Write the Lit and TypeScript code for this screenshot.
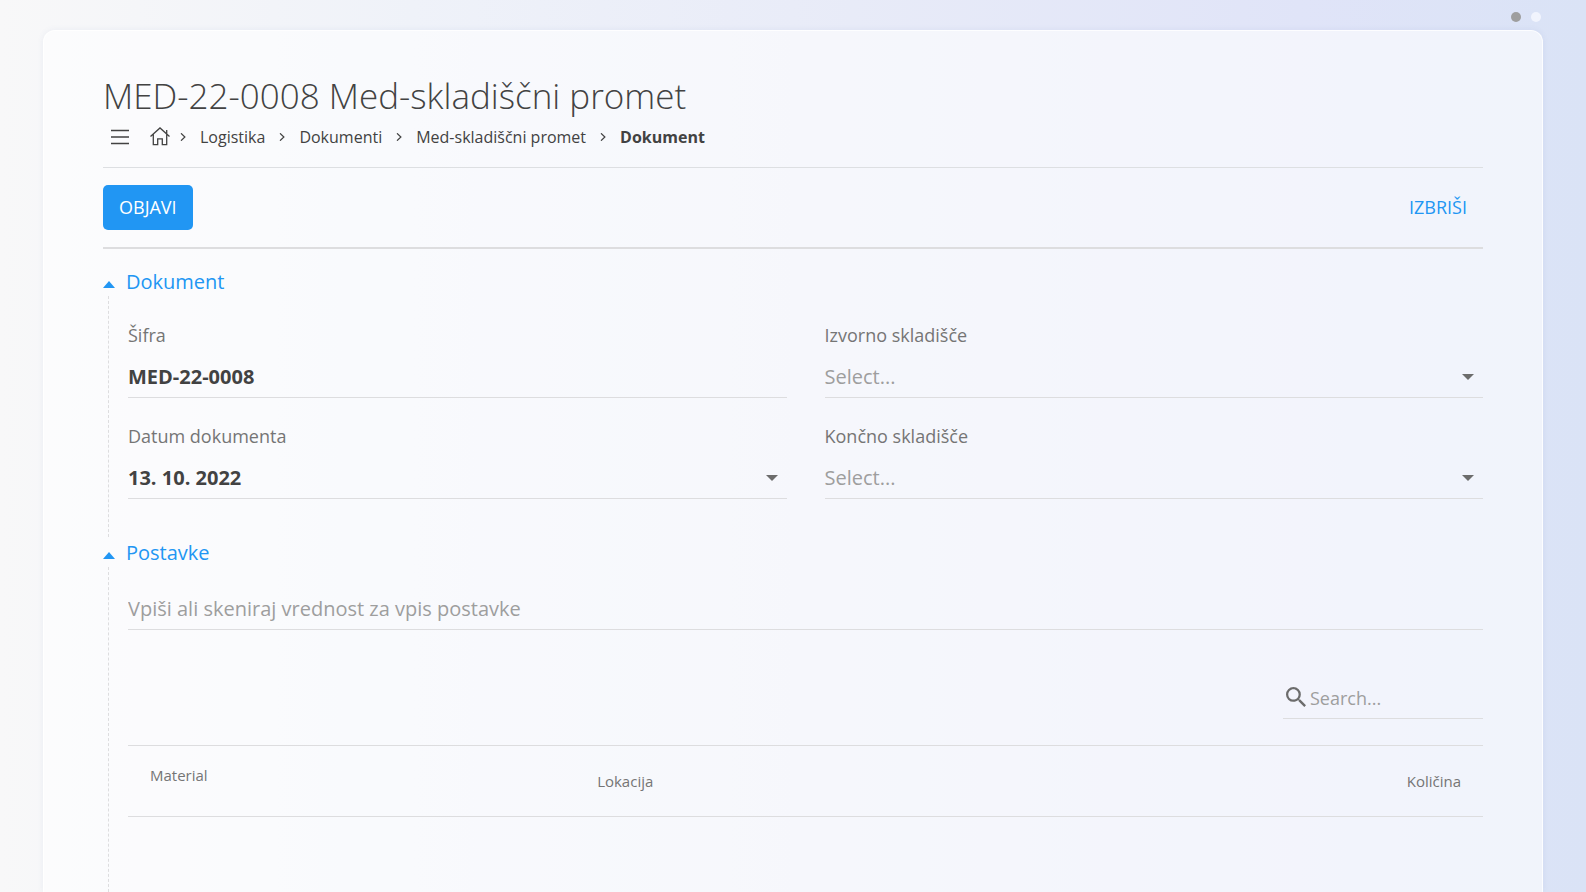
import { LitElement, html, css, svg } from "lit";
import { customElement, state } from "lit/decorators.js";

const crumbs = ["Logistika", "Dokumenti", "Med-skladiščni promet"];

const chevron = html`<svg class="chevron" viewBox="0 0 6 8" aria-hidden="true">
  <path d="M1 .3 4.9 4 1 7.7" fill="none" stroke="currentColor" stroke-width="1.2" />
</svg>`;

const caret = html`<svg class="caret" viewBox="0 0 12 6" aria-hidden="true">
  <path d="M0 0h12L6 6z" fill="currentColor" />
</svg>`;

@customElement("app-root")
export class AppRoot extends LitElement {
  static styles = css`
    :host {
      display: flex;
      flex-direction: column;
      box-sizing: border-box;
      min-height: 100vh;
      padding: 0 43px;
      background: linear-gradient(90deg, #f8f8f9 0%, #eff2f9 26%, #e9ecf8 50%, #e0e4f8 82%, #dae3f6 100%);
      color: #424242;
      font: 400 16px/24px "Open Sans", sans-serif;
    }
    *, *::before {
      box-sizing: border-box;
    }
    button, input, select {
      margin: 0;
      padding: 0;
      border: 0;
      border-radius: 0;
      background: none;
      color: inherit;
      font: inherit;
      outline: 0;
    }
    button {
      cursor: pointer;
    }
    .pages {
      display: flex;
      justify-content: flex-end;
      align-items: center;
      gap: 10px;
      height: 30px;
      padding: 4px 2px 0;
    }
    .dot {
      width: 10px;
      height: 10px;
      border-radius: 50%;
      background: #f1f4fd;
    }
    .dot.active {
      background: #9e9e9e;
    }
    .panel {
      flex: 1;
      display: flex;
      flex-direction: column;
      padding: 38px 59px 0;
      border: 1px solid #ffffffcc;
      border-bottom: 0;
      border-radius: 12px 12px 0 0;
      background: #ffffff99;
      box-shadow: 0 0 6px #5064a014;
    }
    h1 {
      margin: 0;
      font-weight: 300;
      font-size: 35px;
      line-height: 54px;
    }
    .crumbs {
      display: flex;
      align-items: center;
      height: 44px;
      padding: 0 8px 16px;
    }
    .crumbs a {
      color: inherit;
      text-decoration: none;
    }
    .menu, .home {
      display: flex;
    }
    .menu svg {
      width: 18px;
      height: 18px;
    }
    .home {
      margin: 0 10px 0 21px;
    }
    .home svg {
      width: 20px;
      height: 20px;
    }
    .chevron {
      width: 6px;
      height: 8px;
      margin-right: 14px;
    }
    .crumb {
      margin-right: 14px;
    }
    .current {
      font-weight: 700;
    }
    .toolbar {
      display: flex;
      justify-content: space-between;
      padding: 17px 0;
      border-top: 1px solid #dddfe2;
      border-bottom: 2px solid #dddddf;
      margin-bottom: 17px;
    }
    .action {
      height: 45px;
      padding: 0 16px 2px;
      border-radius: 5px;
      color: #2196f3;
      font-size: 18px;
    }
    .action.primary {
      background: #2196f3;
      color: #fff;
    }
    .section {
      display: flex;
      flex-direction: column;
    }
    .section.last {
      flex: 1;
    }
    h2 {
      margin: 0;
      padding-top: 2px;
      font-weight: 400;
      font-size: 20px;
      line-height: 28px;
    }
    .toggle {
      display: flex;
      align-items: center;
      gap: 11px;
      color: #2196f3;
    }
    .toggle svg {
      width: 12px;
      height: 7px;
      margin-top: 4px;
    }
    .body {
      flex: 1;
      margin-left: 5px;
      padding-left: 19px;
      border-left: 1px dashed #dddddf;
    }
    .fields {
      display: grid;
      grid-template-columns: 1fr 1fr;
      gap: 26px 38px;
      padding-top: 27px;
      padding-bottom: 38px;
    }
    .field {
      display: flex;
      flex-direction: column;
      gap: 8px;
      min-width: 0;
    }
    label {
      color: #757575;
      font-size: 18px;
    }
    .control {
      display: flex;
      align-items: center;
      height: 43px;
      border-bottom: 1px solid #dddddf;
      font-size: 20px;
    }
    .control input, .control select {
      flex: 1;
      min-width: 0;
      height: 42px;
    }
    .control input {
      font-weight: 700;
    }
    .control select {
      appearance: none;
      padding-top: 2px;
      color: #9e9e9e;
    }
    .caret {
      width: 12px;
      height: 6px;
      margin: 2px 9px 0 0;
      color: #6c6c6c;
      pointer-events: none;
    }
    ::placeholder {
      color: #9e9e9e;
      opacity: 1;
    }
    .entries {
      display: flex;
      flex-direction: column;
      padding-top: 20px;
    }
    .control .scan {
      font-weight: 400;
    }
    .search {
      display: flex;
      align-items: center;
      align-self: flex-end;
      gap: 4px;
      width: 200px;
      height: 41px;
      margin: 48px 0 26px;
      padding-left: 3px;
      border-bottom: 1px solid #dddddf;
      font-size: 18px;
    }
    .search svg {
      flex: none;
      width: 20px;
      height: 20px;
      margin-bottom: 2px;
      color: #6c6c6c;
    }
    .search input {
      flex: 1;
      min-width: 0;
      height: 40px;
    }
    table {
      width: 100%;
      border-collapse: separate;
      border-spacing: 0;
      table-layout: fixed;
      border-top: 1px solid #dddddf;
      border-bottom: 1px solid #dddddf;
    }
    th {
      height: 70px;
      padding: 0 22px;
      color: #757575;
      font-weight: 400;
      font-size: 15px;
      line-height: 20px;
      text-align: left;
      vertical-align: middle;
    }
    .material {
      width: 33%;
      padding-bottom: 12px;
    }
    .quantity {
      text-align: right;
    }
  `;

  @state() private closed: string[] = [];

  private toggle(name: string) {
    this.closed = this.closed.includes(name)
      ? this.closed.filter((n) => n !== name)
      : [...this.closed, name];
  }

  private heading(name: string) {
    return html`<h2>
      <button class="toggle" aria-expanded=${!this.closed.includes(name)} @click=${() => this.toggle(name)}>
        <svg viewBox="0 0 12 7" aria-hidden="true">${svg`<path d="M0 7h12L6 0z" fill="currentColor" />`}</svg>
        ${name}
      </button>
    </h2>`;
  }

  private picker(id: string, label: string) {
    return html`<div class="field">
      <label for=${id}>${label}</label>
      <div class="control">
        <select id=${id}><option>Select...</option></select>
        ${caret}
      </div>
    </div>`;
  }

  render() {
    return html`
      <div class="pages">
        <button class="dot active" aria-label="1"></button>
        <button class="dot" aria-label="2"></button>
      </div>
      <main class="panel">
        <h1>MED-22-0008 Med-skladiščni promet</h1>
        <nav class="crumbs">
          <button class="menu" aria-label="Menu">
            <svg viewBox="0 0 18 18">
              <path d="M0 2.5h18M0 9h18M0 15.5h18" stroke="currentColor" stroke-width="1.5" />
            </svg>
          </button>
          <a class="home" href="#" aria-label="Home">
            <svg viewBox="0 0 20 20" fill="none" stroke="currentColor" stroke-width="1.3">
              <path d="M.5 9.4 10 .9l9.5 8.5M3.3 7.4v10.2h4.4v-5.8h4.6v5.8h4.4V3" />
            </svg>
          </a>
          ${crumbs.map((c) => html`${chevron}<a class="crumb" href="#">${c}</a>`)}
          ${chevron}<span class="current" aria-current="page">Dokument</span>
        </nav>
        <div class="toolbar">
          <button class="action primary">OBJAVI</button>
          <button class="action">IZBRIŠI</button>
        </div>
        <section class="section">
          ${this.heading("Dokument")}
          <div class="body fields" ?hidden=${this.closed.includes("Dokument")}>
            <div class="field">
              <label for="code">Šifra</label>
              <div class="control"><input id="code" value="MED-22-0008" /></div>
            </div>
            ${this.picker("source", "Izvorno skladišče")}
            <div class="field">
              <label for="date">Datum dokumenta</label>
              <div class="control"><input id="date" value="13. 10. 2022" />${caret}</div>
            </div>
            ${this.picker("target", "Končno skladišče")}
          </div>
        </section>
        <section class="section last">
          ${this.heading("Postavke")}
          <div class="body entries" ?hidden=${this.closed.includes("Postavke")}>
            <div class="control">
              <input class="scan" aria-label="Postavka" placeholder="Vpiši ali skeniraj vrednost za vpis postavke" />
            </div>
            <div class="search">
              <svg viewBox="3 3 17.5 17.5" aria-hidden="true">
                <path fill="currentColor" d="M15.5 14h-.79l-.28-.27A6.47 6.47 0 0 0 16 9.5 6.5 6.5 0 1 0 9.5 16c1.61 0 3.09-.59 4.23-1.57l.27.28v.79l5 4.99L20.49 19l-4.99-5zm-6 0C7.01 14 5 11.99 5 9.5S7.01 5 9.5 5 14 7.01 14 9.5 11.99 14 9.5 14z" />
              </svg>
              <input type="text" aria-label="Search" placeholder="Search..." />
            </div>
            <table>
              <thead>
                <tr>
                  <th class="material">Material</th>
                  <th>Lokacija</th>
                  <th class="quantity">Količina</th>
                </tr>
              </thead>
            </table>
          </div>
        </section>
      </main>
    `;
  }
}
